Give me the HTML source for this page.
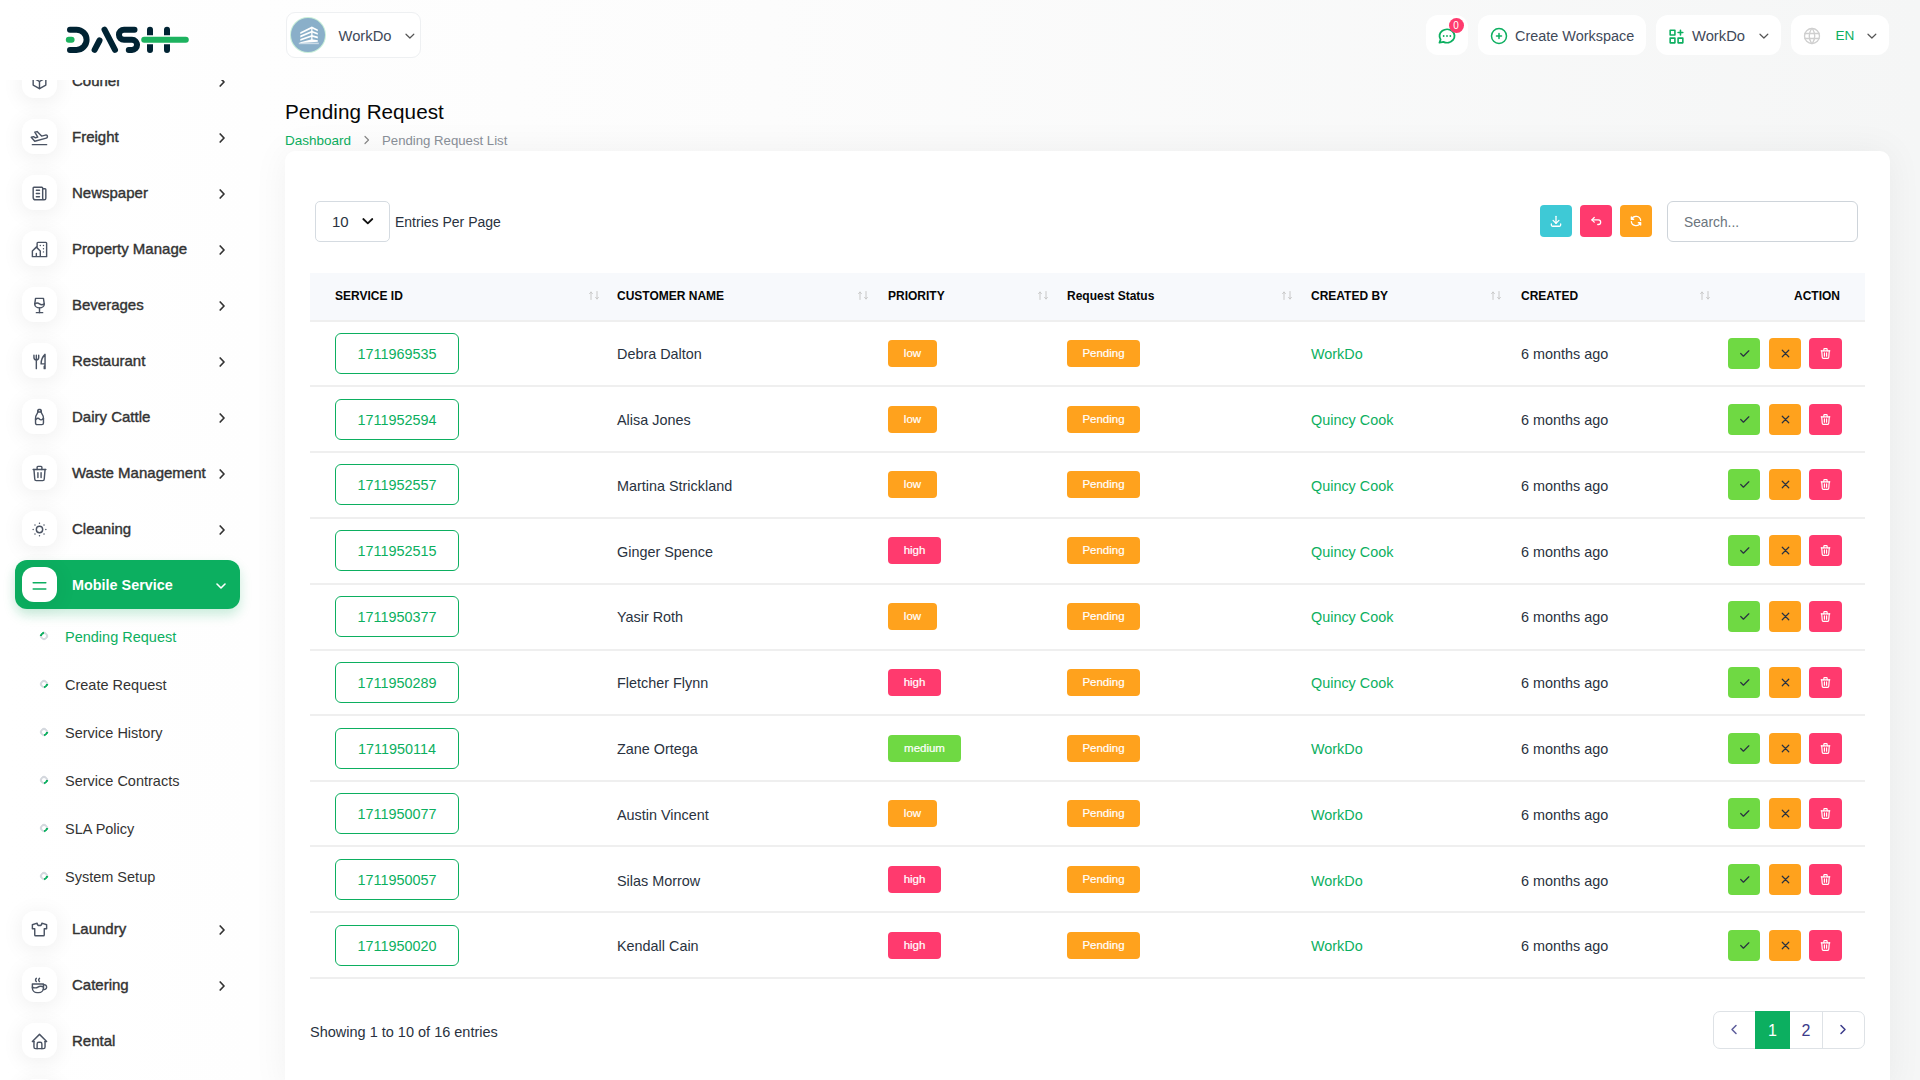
<!DOCTYPE html>
<html><head><meta charset="utf-8">
<style>
*{box-sizing:border-box;margin:0;padding:0}
html,body{width:1920px;height:1080px;overflow:hidden}
body{font-family:"Liberation Sans",sans-serif;position:relative;background:linear-gradient(90deg,#ffffff 0%,#fcfcfc 40%,#f5f6f6 100%);color:#293240}
.abs{position:absolute}
svg.ic{fill:none;stroke:currentColor;stroke-linecap:round;stroke-linejoin:round}
#sidebar{position:absolute;left:0;top:0;width:270px;height:1080px}
#menu{position:absolute;left:0;top:80px;width:270px;height:1000px;overflow:hidden}
#logohdr{position:absolute;left:0;top:0;width:270px;height:80px;z-index:5}
.mi{position:absolute;left:15px;width:225px;height:48px}
.mi .box{position:absolute;left:7px;top:6.5px;width:35px;height:35px;border-radius:12px;background:#fff;box-shadow:0 3px 22px rgba(0,0,0,0.075);color:#4a5363}
.mi .box svg{position:absolute;left:8.3px;top:8.8px;width:19px;height:19px;stroke-width:1.8}
.mi .lbl{position:absolute;left:57px;top:0;line-height:48px;font-size:15px;color:#333;-webkit-text-stroke:0.4px #333;white-space:nowrap}
.mi .chev{position:absolute;left:201.5px;top:20.5px;width:10px;height:10px;color:#333}
.mi.active{background:#0caf60;border-radius:12px;box-shadow:0 6px 12px rgba(12,175,96,0.22)}
.mi.active .lbl{color:#fff;-webkit-text-stroke:0;font-weight:bold;font-size:14.4px}
.sub{position:absolute;left:65px;font-size:14.5px;color:#333;line-height:20px;white-space:nowrap}
.sub.act{color:#0caf60}
.sub .dot{position:absolute;left:-25px;top:5px;width:8px;height:8px;border-radius:50%;border:2px solid #d4d8de;border-bottom-color:#0caf60;transform:rotate(-45deg)}
.sub.act .dot{border-bottom-color:#d4d8de;border-top-color:#0caf60}
.hbox{position:absolute;top:15px;height:40px;background:#fff;border-radius:12px}
#card{position:absolute;left:285px;top:151px;width:1605px;height:940px;background:#fff;border-radius:10px;box-shadow:0 0 36px rgba(0,20,30,0.055)}
.thead{position:absolute;left:310px;top:273px;width:1555px;height:49px;background:#f7f9fc;border-bottom:2px solid #efefef}
.th{position:absolute;top:288px;font-size:12px;font-weight:bold;color:#060606;line-height:16px;white-space:nowrap}
.srt{position:absolute;top:291px;color:#c8c8c8;stroke-width:1}
.row{position:absolute;left:310px;width:1555px;height:65.73px}
.rl{position:absolute;left:310px;width:1555px;height:2px;background:#efefef}
.cell{position:absolute;font-size:14.4px;line-height:20px;color:#293240;white-space:nowrap}
.sid{position:absolute;left:25px;top:12.5px;width:124px;height:41px;border:1px solid #0caf60;border-radius:6px;color:#0caf60;font-size:14.4px;text-align:center;line-height:40.5px}
.badge{position:absolute;top:19.5px;height:27px;border-radius:4px;color:#fff;font-size:11.5px;text-align:center;line-height:27px;-webkit-text-stroke:0.2px #fff}
.ab{position:absolute;top:17.5px;width:32px;height:31px;border-radius:4px}
.ab svg{position:absolute;left:9.5px;top:9px;width:13px;height:13px}
.tb{position:absolute;top:205px;width:32px;height:32px;border-radius:4px}
.tb svg{position:absolute;left:9px;top:9px;width:14px;height:14px;stroke:#fff;stroke-width:2.2}
</style></head>
<body>

<div id="sidebar">
<div id="logohdr">
<svg class="abs" style="left:0;top:0" width="270" height="80" viewBox="0 0 270 80">
<g fill="none" stroke-linecap="round" stroke-width="6">
<path d="M70 29.7H76.5A10.1 10.1 0 0 1 76.5 49.9H70" stroke="#002333"/>
<path d="M104.5 29.7L115 49.9M99.5 40.5L94.6 49.9" stroke="#002333"/>
<path d="M134.5 29.7H124A5.05 5.05 0 0 0 124 39.8H132A5.05 5.05 0 0 1 132 49.9H128.8" stroke="#002333"/>
<path d="M150 29.7V49.9M167 29.7V49.9" stroke="#002333"/>
<path d="M143.5 39.8H186.5" stroke="#fff" stroke-width="9"/>
<path d="M144.2 39.8H185.8M68.8 39.8H71.6" stroke="#1db25f"/>
</g></svg>
</div>

<div id="menu">
<div class="mi" style="top:-23.5px"><div class="box"><svg class="ic" viewBox="0 0 24 24" ><path d="M12 3l8 4.5v9l-8 4.5l-8-4.5v-9l8-4.5"/><path d="M12 12l8-4.5"/><path d="M12 12v9"/><path d="M12 12l-8-4.5"/></svg></div><div class="lbl">Courier</div><svg class="ic chev" viewBox="0 0 10 10" style="stroke-width:1.7"><path d="M3.2 1L7 5L3.2 9"/></svg></div>
<div class="mi" style="top:32.5px"><div class="box"><svg class="ic" viewBox="0 0 24 24" ><path d="M14.639 10.258l4.83-1.294a2 2 0 1 1 1.035 3.863l-14.489 3.883l-4.45-5.02l2.897-.776l2.45 1.414l2.897-.776l-3.743-6.244l2.898-.777l5.675 5.727z"/><path d="M3 21h18"/></svg></div><div class="lbl">Freight</div><svg class="ic chev" viewBox="0 0 10 10" style="stroke-width:1.7"><path d="M3.2 1L7 5L3.2 9"/></svg></div>
<div class="mi" style="top:88.5px"><div class="box"><svg class="ic" viewBox="0 0 24 24" ><path d="M16 6h3a1 1 0 0 1 1 1v11a2 2 0 0 1-4 0v-13a1 1 0 0 0-1-1h-10a1 1 0 0 0-1 1v12a3 3 0 0 0 3 3h11"/><path d="M8 8h4"/><path d="M8 12h4"/><path d="M8 16h4"/></svg></div><div class="lbl">Newspaper</div><svg class="ic chev" viewBox="0 0 10 10" style="stroke-width:1.7"><path d="M3.2 1L7 5L3.2 9"/></svg></div>
<div class="mi" style="top:144.5px"><div class="box"><svg class="ic" viewBox="0 0 24 24" ><path d="M8 9l5 5v7h-5v-4m0 4h-5v-7l5-5m1 1v-6a1 1 0 0 1 1-1h10a1 1 0 0 1 1 1v17h-8"/><path d="M13 7v.01"/><path d="M17 7v.01"/><path d="M17 11v.01"/><path d="M17 15v.01"/></svg></div><div class="lbl">Property Manage</div><svg class="ic chev" viewBox="0 0 10 10" style="stroke-width:1.7"><path d="M3.2 1L7 5L3.2 9"/></svg></div>
<div class="mi" style="top:200.5px"><div class="box"><svg class="ic" viewBox="0 0 24 24" ><path d="M8 21h8"/><path d="M12 15v6"/><path d="M17 3l1 7c0 3.012-2.686 5-6 5s-6-1.988-6-5l1-7h10z"/><path d="M6 10a5 5 0 0 1 6 0a5 5 0 0 0 6 0"/></svg></div><div class="lbl">Beverages</div><svg class="ic chev" viewBox="0 0 10 10" style="stroke-width:1.7"><path d="M3.2 1L7 5L3.2 9"/></svg></div>
<div class="mi" style="top:256.5px"><div class="box"><svg class="ic" viewBox="0 0 24 24" ><path d="M19 3v12h-5c-.023-3.681.184-7.406 5-12zm0 12v6h-1v-3m-10-14v17m-3-17v3a3 3 0 1 0 6 0v-3"/></svg></div><div class="lbl">Restaurant</div><svg class="ic chev" viewBox="0 0 10 10" style="stroke-width:1.7"><path d="M3.2 1L7 5L3.2 9"/></svg></div>
<div class="mi" style="top:312.5px"><div class="box"><svg class="ic" viewBox="0 0 24 24" ><path d="M10 5h4v-2a1 1 0 0 0-1-1h-2a1 1 0 0 0-1 1v2z"/><path d="M14 3.5c0 1.626.507 3.212 1.45 4.537l.05.07a8.093 8.093 0 0 1 1.5 4.694v6.199a2 2 0 0 1-2 2h-6a2 2 0 0 1-2-2v-6.2c0-1.682.524-3.322 1.5-4.693l.05-.07a7.823 7.823 0 0 0 1.45-4.537"/><path d="M7 14.803a2.4 2.4 0 0 0 1-.803a2.4 2.4 0 0 1 2-1a2.4 2.4 0 0 1 2 1a2.4 2.4 0 0 0 2 1a2.4 2.4 0 0 0 2-1a2.4 2.4 0 0 1 1-.805"/></svg></div><div class="lbl">Dairy Cattle</div><svg class="ic chev" viewBox="0 0 10 10" style="stroke-width:1.7"><path d="M3.2 1L7 5L3.2 9"/></svg></div>
<div class="mi" style="top:368.5px"><div class="box"><svg class="ic" viewBox="0 0 24 24" ><path d="M4 7h16"/><path d="M10 11v6"/><path d="M14 11v6"/><path d="M5 7l1 12a2 2 0 0 0 2 2h8a2 2 0 0 0 2-2l1-12"/><path d="M9 7v-3a1 1 0 0 1 1-1h4a1 1 0 0 1 1 1v3"/></svg></div><div class="lbl">Waste Management</div><svg class="ic chev" viewBox="0 0 10 10" style="stroke-width:1.7"><path d="M3.2 1L7 5L3.2 9"/></svg></div>
<div class="mi" style="top:424.5px"><div class="box"><svg class="ic" viewBox="0 0 24 24" ><path d="M12 12m-4 0a4 4 0 1 0 8 0a4 4 0 1 0-8 0"/><path d="M4 12h.01"/><path d="M12 4v.01"/><path d="M20 12h.01"/><path d="M12 20v.01"/><path d="M6.31 6.31l-.01-.01"/><path d="M17.71 6.31l-.01-.01"/><path d="M17.7 17.7l.01.01"/><path d="M6.3 17.7l.01.01"/></svg></div><div class="lbl">Cleaning</div><svg class="ic chev" viewBox="0 0 10 10" style="stroke-width:1.7"><path d="M3.2 1L7 5L3.2 9"/></svg></div>
<div class="mi" style="top:824.5px"><div class="box"><svg class="ic" viewBox="0 0 24 24" ><path d="M15 4l6 2v5h-3v8a1 1 0 0 1-1 1h-10a1 1 0 0 1-1-1v-8h-3v-5l6-2a3 3 0 0 0 6 0"/></svg></div><div class="lbl">Laundry</div><svg class="ic chev" viewBox="0 0 10 10" style="stroke-width:1.7"><path d="M3.2 1L7 5L3.2 9"/></svg></div>
<div class="mi" style="top:880.5px"><div class="box"><svg class="ic" viewBox="0 0 24 24" ><path d="M3 14c.83.642 2.077 1.017 3.5 1c1.423.017 2.67-.358 3.5-1c.83-.642 2.077-1.017 3.5-1c1.423-.017 2.67.358 3.5 1"/><path d="M8 3a2.4 2.4 0 0 0-1 2a2.4 2.4 0 0 0 1 2"/><path d="M12 3a2.4 2.4 0 0 0-1 2a2.4 2.4 0 0 0 1 2"/><path d="M3 10h14v5a6 6 0 0 1-6 6h-2a6 6 0 0 1-6-6v-5z"/><path d="M16.746 16.726a3 3 0 1 0 .252-5.555"/></svg></div><div class="lbl">Catering</div><svg class="ic chev" viewBox="0 0 10 10" style="stroke-width:1.7"><path d="M3.2 1L7 5L3.2 9"/></svg></div>
<div class="mi" style="top:936.5px"><div class="box"><svg class="ic" viewBox="0 0 24 24" ><path d="M5 12h-2l9-9l9 9h-2"/><path d="M5 12v7a2 2 0 0 0 2 2h10a2 2 0 0 0 2-2v-7"/><path d="M9 21v-6a2 2 0 0 1 2-2h2a2 2 0 0 1 2 2v6"/></svg></div><div class="lbl">Rental</div></div>
<div class="mi" style="top:992.5px"><div class="box"><svg class="ic" viewBox="0 0 24 24" ><path d="M12 3l8 4.5v9l-8 4.5l-8-4.5v-9l8-4.5"/><path d="M12 12l8-4.5"/><path d="M12 12v9"/><path d="M12 12l-8-4.5"/></svg></div><div class="lbl"></div></div>
<div class="mi active" style="top:480px;height:48.6px"><div class="box" style="color:#0caf60;top:7px"><svg class="ic" viewBox="0 0 24 24" ><path d="M4 8.5h16"/><path d="M4 16.5h16"/></svg></div><div class="lbl" style="line-height:48.6px;top:1px">Mobile Service</div><svg class="ic chev" viewBox="0 0 10 10" style="stroke-width:1.6;color:#fff;left:201px"><path d="M1 3L5 7L9 3"/></svg></div>
<div class="sub act" style="top:547px"><span class="dot"></span>Pending Request</div>
<div class="sub" style="top:595px"><span class="dot"></span>Create Request</div>
<div class="sub" style="top:643px"><span class="dot"></span>Service History</div>
<div class="sub" style="top:691px"><span class="dot"></span>Service Contracts</div>
<div class="sub" style="top:739px"><span class="dot"></span>SLA Policy</div>
<div class="sub" style="top:787px"><span class="dot"></span>System Setup</div>
</div></div>
<div class="hbox" style="left:285.5px;top:12px;width:135.5px;height:45.5px;border:1px solid #eef0f2;border-radius:9px">
 <div class="abs" style="left:4.5px;top:5px;width:34px;height:34px;border-radius:50%;background:#8aafc9;box-shadow:0 0 0 1px #c9efd9"></div>
 <svg class="abs" style="left:11px;top:12px" width="22" height="20" viewBox="0 0 22 20"><g fill="#fff">
 <path d="M2.3 7.2L13.9 1.6L19.8 4.4V6.2L13.9 3.4L2.3 9Z"/>
 <path d="M2.3 10.6L13.9 5.8L19.8 8V9.8L13.9 7.6L2.3 12.4Z"/>
 <path d="M2.3 14L13.9 10L19.8 11.6V13.4L13.9 11.8L2.3 15.8Z"/>
 <path d="M2.3 17.2L13.9 14.2L19.8 15.2V16.8L2.3 17.9Z"/>
 <rect x="13.2" y="2" width="1.3" height="15"/>
 <rect x="0.8" y="17.6" width="20" height="1.6" opacity="0.55"/></g></svg>
 <div class="abs" style="left:52px;top:13.5px;font-size:14.75px;line-height:18px;color:#3f4a5a">WorkDo</div>
 <svg class="ic abs" style="left:118.5px;top:20px;color:#555" width="10" height="7" viewBox="0 0 10 7"><path d="M1 1.2L4.9 5L8.8 1.2" style="stroke-width:1.2"/></svg>
</div>
<div class="hbox" style="left:1426px;width:42px">
 <svg class="ic abs" style="left:11px;top:11px;color:#0caf60;stroke-width:2.2" width="20" height="20" viewBox="0 0 24 24"><path d="M3 20l1.3-3.9c-2.324-3.437-1.426-7.872 2.1-10.374c3.526-2.501 8.59-2.296 11.845.48c3.255 2.777 3.695 7.266 1.029 10.501c-2.666 3.235-7.615 4.215-11.574 2.293l-4.7 1"/><path d="M12 12v.01M8 12v.01M16 12v.01"/></svg>
 <div class="abs" style="left:22.5px;top:2.5px;width:15px;height:15px;border-radius:50%;background:#ff3a6e;color:#fff;font-size:10px;line-height:15px;text-align:center">0</div>
</div>
<div class="hbox" style="left:1478px;width:168px">
 <svg class="ic abs" style="left:11px;top:10.5px;color:#0caf60;stroke-width:1.8" width="20" height="20" viewBox="0 0 24 24"><path d="M3 12a9 9 0 1 0 18 0a9 9 0 1 0-18 0"/><path d="M9 12h6M12 9v6"/></svg>
 <div class="abs" style="left:37px;top:11.6px;font-size:14.45px;line-height:18px;color:#3f4a5a;white-space:nowrap">Create Workspace</div>
</div>
<div class="hbox" style="left:1656px;width:125px">
 <svg class="ic abs" style="left:11px;top:11.5px;color:#0caf60;stroke-width:2" width="19" height="19" viewBox="0 0 24 24"><path d="M4 4h6v6h-6zM4 14h6v6h-6zM14 14h6v6h-6zM14 7h6M17 4v6"/></svg>
 <div class="abs" style="left:36px;top:11.5px;font-size:14.75px;line-height:18px;color:#3f4a5a">WorkDo</div>
 <svg class="ic abs" style="left:102.5px;top:18px;color:#555" width="10" height="7" viewBox="0 0 10 7"><path d="M1 1.2L4.9 5L8.8 1.2" style="stroke-width:1.2"/></svg>
</div>
<div class="hbox" style="left:1791px;width:98px">
 <svg class="ic abs" style="left:11px;top:10.5px;color:#cfcfcf;stroke-width:1.6" width="20" height="20" viewBox="0 0 24 24"><path d="M3 12a9 9 0 1 0 18 0a9 9 0 1 0-18 0"/><path d="M3.6 9h16.8M3.6 15h16.8"/><path d="M11.5 3a17 17 0 0 0 0 18M12.5 3a17 17 0 0 1 0 18"/></svg>
 <div class="abs" style="left:44.5px;top:11.5px;font-size:13.6px;line-height:18px;color:#0caf60">EN</div>
 <svg class="ic abs" style="left:75.5px;top:18px;color:#555" width="10" height="7" viewBox="0 0 10 7"><path d="M1 1.2L4.9 5L8.8 1.2" style="stroke-width:1.2"/></svg>
</div>
<div class="abs" style="left:285px;top:100px;font-size:20.7px;line-height:24px;color:#060606;white-space:nowrap">Pending Request</div>
<div class="abs" style="left:285px;top:133px;font-size:13.5px;line-height:16px;color:#0caf60;white-space:nowrap">Dashboard</div>
<svg class="ic abs" style="left:363px;top:135px;color:#888" width="8" height="10" viewBox="0 0 8 10"><path d="M2 1.5L5.5 5L2 8.5" style="stroke-width:1.2"/></svg>
<div class="abs" style="left:382px;top:133px;font-size:13.2px;line-height:16px;color:#8a9099;white-space:nowrap">Pending Request List</div>

<div id="card"></div>
<div class="abs" style="left:315px;top:201px;width:75px;height:40.5px;border:1px solid #d5dbe1;border-radius:5px"></div>
<div class="abs" style="left:332px;top:213px;font-size:15px;line-height:18px;color:#293240">10</div>
<svg class="ic abs" style="left:361px;top:217px;color:#111;stroke-width:1.8" width="13" height="9" viewBox="0 0 13 9"><path d="M2.3 2L6.8 6.3L11.3 2"/></svg>
<div class="abs" style="left:395px;top:213px;font-size:14px;line-height:18px;color:#293240;white-space:nowrap">Entries Per Page</div>
<div class="tb" style="left:1540px;background:#3ec9d6"><svg class="ic" viewBox="0 0 24 24"><path d="M4 17v2a2 2 0 0 0 2 2h12a2 2 0 0 0 2-2v-2"/><path d="M7 11l5 5l5-5"/><path d="M12 4v12"/></svg></div>
<div class="tb" style="left:1580px;background:#ff3a6e"><svg class="ic" viewBox="0 0 24 24"><path d="M9 14l-4-4l4-4"/><path d="M5 10h11a4 4 0 1 1 0 8h-1"/></svg></div>
<div class="tb" style="left:1620px;background:#ffa21d"><svg class="ic" viewBox="0 0 24 24"><path d="M20 11a8.1 8.1 0 0 0-15.5-2m-.5-4v4h4"/><path d="M4 13a8.1 8.1 0 0 0 15.5 2m.5 4v-4h-4"/></svg></div>
<div class="abs" style="left:1667px;top:201px;width:191px;height:40.5px;border:1px solid #ced4da;border-radius:6px"></div>
<div class="abs" style="left:1684px;top:214px;font-size:13.75px;line-height:18px;color:#6c757d">Search...</div>

<div class="thead"></div>
<div class="th" style="left:335px">SERVICE ID</div><svg class="ic srt" style="left:589px" width="10" height="9" viewBox="0 0 10 9"><path d="M2 8.5V1M0.6 2.6L2 1L3.4 2.6M8 0.5V8M6.6 6.4L8 8L9.4 6.4"/></svg>
<div class="th" style="left:617px">CUSTOMER NAME</div><svg class="ic srt" style="left:858px" width="10" height="9" viewBox="0 0 10 9"><path d="M2 8.5V1M0.6 2.6L2 1L3.4 2.6M8 0.5V8M6.6 6.4L8 8L9.4 6.4"/></svg>
<div class="th" style="left:888px">PRIORITY</div><svg class="ic srt" style="left:1038px" width="10" height="9" viewBox="0 0 10 9"><path d="M2 8.5V1M0.6 2.6L2 1L3.4 2.6M8 0.5V8M6.6 6.4L8 8L9.4 6.4"/></svg>
<div class="th" style="left:1067px">Request Status</div><svg class="ic srt" style="left:1282px" width="10" height="9" viewBox="0 0 10 9"><path d="M2 8.5V1M0.6 2.6L2 1L3.4 2.6M8 0.5V8M6.6 6.4L8 8L9.4 6.4"/></svg>
<div class="th" style="left:1311px">CREATED BY</div><svg class="ic srt" style="left:1491px" width="10" height="9" viewBox="0 0 10 9"><path d="M2 8.5V1M0.6 2.6L2 1L3.4 2.6M8 0.5V8M6.6 6.4L8 8L9.4 6.4"/></svg>
<div class="th" style="left:1521px">CREATED</div><svg class="ic srt" style="left:1700px" width="10" height="9" viewBox="0 0 10 9"><path d="M2 8.5V1M0.6 2.6L2 1L3.4 2.6M8 0.5V8M6.6 6.4L8 8L9.4 6.4"/></svg>
<div class="th" style="left:auto;right:80px">ACTION</div>
<div class="rl" style="top:385px"></div>
<div class="row" style="top:320.40px"><div class="sid">1711969535</div><div class="cell nm" style="left:307px;top:23.8px">Debra Dalton</div><div class="badge" style="left:578px;width:49px;background:#ffa21d">low</div><div class="badge" style="left:757px;width:73px;background:#ffa21d">Pending</div><div class="cell" style="left:1001px;top:23.8px;color:#0caf60">WorkDo</div><div class="cell" style="left:1211px;top:23.8px">6 months ago</div><div class="ab" style="left:1418px;background:#6fd943"><svg class="ic" viewBox="0 0 24 24" style="stroke:#293240;stroke-width:2.2"><path d="M5 12l5 5l10-10"/></svg></div><div class="ab" style="left:1459px;background:#ffa21d"><svg class="ic" viewBox="0 0 24 24" style="stroke:#293240;stroke-width:2.2"><path d="M18 6L6 18M6 6l12 12"/></svg></div><div class="ab" style="left:1499px;width:33px;background:#ff3a6e"><svg class="ic" viewBox="0 0 24 24" style="stroke:#fff;stroke-width:2.2"><path d="M4 7h16"/><path d="M10 11v6"/><path d="M14 11v6"/><path d="M5 7l1 12a2 2 0 0 0 2 2h8a2 2 0 0 0 2-2l1-12"/><path d="M9 7v-3a1 1 0 0 1 1-1h4a1 1 0 0 1 1 1v3"/></svg></div></div>
<div class="rl" style="top:451px"></div>
<div class="row" style="top:386.19px"><div class="sid">1711952594</div><div class="cell nm" style="left:307px;top:23.8px">Alisa Jones</div><div class="badge" style="left:578px;width:49px;background:#ffa21d">low</div><div class="badge" style="left:757px;width:73px;background:#ffa21d">Pending</div><div class="cell" style="left:1001px;top:23.8px;color:#0caf60">Quincy Cook</div><div class="cell" style="left:1211px;top:23.8px">6 months ago</div><div class="ab" style="left:1418px;background:#6fd943"><svg class="ic" viewBox="0 0 24 24" style="stroke:#293240;stroke-width:2.2"><path d="M5 12l5 5l10-10"/></svg></div><div class="ab" style="left:1459px;background:#ffa21d"><svg class="ic" viewBox="0 0 24 24" style="stroke:#293240;stroke-width:2.2"><path d="M18 6L6 18M6 6l12 12"/></svg></div><div class="ab" style="left:1499px;width:33px;background:#ff3a6e"><svg class="ic" viewBox="0 0 24 24" style="stroke:#fff;stroke-width:2.2"><path d="M4 7h16"/><path d="M10 11v6"/><path d="M14 11v6"/><path d="M5 7l1 12a2 2 0 0 0 2 2h8a2 2 0 0 0 2-2l1-12"/><path d="M9 7v-3a1 1 0 0 1 1-1h4a1 1 0 0 1 1 1v3"/></svg></div></div>
<div class="rl" style="top:517px"></div>
<div class="row" style="top:451.98px"><div class="sid">1711952557</div><div class="cell nm" style="left:307px;top:23.8px">Martina Strickland</div><div class="badge" style="left:578px;width:49px;background:#ffa21d">low</div><div class="badge" style="left:757px;width:73px;background:#ffa21d">Pending</div><div class="cell" style="left:1001px;top:23.8px;color:#0caf60">Quincy Cook</div><div class="cell" style="left:1211px;top:23.8px">6 months ago</div><div class="ab" style="left:1418px;background:#6fd943"><svg class="ic" viewBox="0 0 24 24" style="stroke:#293240;stroke-width:2.2"><path d="M5 12l5 5l10-10"/></svg></div><div class="ab" style="left:1459px;background:#ffa21d"><svg class="ic" viewBox="0 0 24 24" style="stroke:#293240;stroke-width:2.2"><path d="M18 6L6 18M6 6l12 12"/></svg></div><div class="ab" style="left:1499px;width:33px;background:#ff3a6e"><svg class="ic" viewBox="0 0 24 24" style="stroke:#fff;stroke-width:2.2"><path d="M4 7h16"/><path d="M10 11v6"/><path d="M14 11v6"/><path d="M5 7l1 12a2 2 0 0 0 2 2h8a2 2 0 0 0 2-2l1-12"/><path d="M9 7v-3a1 1 0 0 1 1-1h4a1 1 0 0 1 1 1v3"/></svg></div></div>
<div class="rl" style="top:583px"></div>
<div class="row" style="top:517.77px"><div class="sid">1711952515</div><div class="cell nm" style="left:307px;top:23.8px">Ginger Spence</div><div class="badge" style="left:578px;width:53px;background:#ff3a6e">high</div><div class="badge" style="left:757px;width:73px;background:#ffa21d">Pending</div><div class="cell" style="left:1001px;top:23.8px;color:#0caf60">Quincy Cook</div><div class="cell" style="left:1211px;top:23.8px">6 months ago</div><div class="ab" style="left:1418px;background:#6fd943"><svg class="ic" viewBox="0 0 24 24" style="stroke:#293240;stroke-width:2.2"><path d="M5 12l5 5l10-10"/></svg></div><div class="ab" style="left:1459px;background:#ffa21d"><svg class="ic" viewBox="0 0 24 24" style="stroke:#293240;stroke-width:2.2"><path d="M18 6L6 18M6 6l12 12"/></svg></div><div class="ab" style="left:1499px;width:33px;background:#ff3a6e"><svg class="ic" viewBox="0 0 24 24" style="stroke:#fff;stroke-width:2.2"><path d="M4 7h16"/><path d="M10 11v6"/><path d="M14 11v6"/><path d="M5 7l1 12a2 2 0 0 0 2 2h8a2 2 0 0 0 2-2l1-12"/><path d="M9 7v-3a1 1 0 0 1 1-1h4a1 1 0 0 1 1 1v3"/></svg></div></div>
<div class="rl" style="top:649px"></div>
<div class="row" style="top:583.56px"><div class="sid">1711950377</div><div class="cell nm" style="left:307px;top:23.8px">Yasir Roth</div><div class="badge" style="left:578px;width:49px;background:#ffa21d">low</div><div class="badge" style="left:757px;width:73px;background:#ffa21d">Pending</div><div class="cell" style="left:1001px;top:23.8px;color:#0caf60">Quincy Cook</div><div class="cell" style="left:1211px;top:23.8px">6 months ago</div><div class="ab" style="left:1418px;background:#6fd943"><svg class="ic" viewBox="0 0 24 24" style="stroke:#293240;stroke-width:2.2"><path d="M5 12l5 5l10-10"/></svg></div><div class="ab" style="left:1459px;background:#ffa21d"><svg class="ic" viewBox="0 0 24 24" style="stroke:#293240;stroke-width:2.2"><path d="M18 6L6 18M6 6l12 12"/></svg></div><div class="ab" style="left:1499px;width:33px;background:#ff3a6e"><svg class="ic" viewBox="0 0 24 24" style="stroke:#fff;stroke-width:2.2"><path d="M4 7h16"/><path d="M10 11v6"/><path d="M14 11v6"/><path d="M5 7l1 12a2 2 0 0 0 2 2h8a2 2 0 0 0 2-2l1-12"/><path d="M9 7v-3a1 1 0 0 1 1-1h4a1 1 0 0 1 1 1v3"/></svg></div></div>
<div class="rl" style="top:714px"></div>
<div class="row" style="top:649.35px"><div class="sid">1711950289</div><div class="cell nm" style="left:307px;top:23.8px">Fletcher Flynn</div><div class="badge" style="left:578px;width:53px;background:#ff3a6e">high</div><div class="badge" style="left:757px;width:73px;background:#ffa21d">Pending</div><div class="cell" style="left:1001px;top:23.8px;color:#0caf60">Quincy Cook</div><div class="cell" style="left:1211px;top:23.8px">6 months ago</div><div class="ab" style="left:1418px;background:#6fd943"><svg class="ic" viewBox="0 0 24 24" style="stroke:#293240;stroke-width:2.2"><path d="M5 12l5 5l10-10"/></svg></div><div class="ab" style="left:1459px;background:#ffa21d"><svg class="ic" viewBox="0 0 24 24" style="stroke:#293240;stroke-width:2.2"><path d="M18 6L6 18M6 6l12 12"/></svg></div><div class="ab" style="left:1499px;width:33px;background:#ff3a6e"><svg class="ic" viewBox="0 0 24 24" style="stroke:#fff;stroke-width:2.2"><path d="M4 7h16"/><path d="M10 11v6"/><path d="M14 11v6"/><path d="M5 7l1 12a2 2 0 0 0 2 2h8a2 2 0 0 0 2-2l1-12"/><path d="M9 7v-3a1 1 0 0 1 1-1h4a1 1 0 0 1 1 1v3"/></svg></div></div>
<div class="rl" style="top:780px"></div>
<div class="row" style="top:715.14px"><div class="sid">1711950114</div><div class="cell nm" style="left:307px;top:23.8px">Zane Ortega</div><div class="badge" style="left:578px;width:73px;background:#6fd943">medium</div><div class="badge" style="left:757px;width:73px;background:#ffa21d">Pending</div><div class="cell" style="left:1001px;top:23.8px;color:#0caf60">WorkDo</div><div class="cell" style="left:1211px;top:23.8px">6 months ago</div><div class="ab" style="left:1418px;background:#6fd943"><svg class="ic" viewBox="0 0 24 24" style="stroke:#293240;stroke-width:2.2"><path d="M5 12l5 5l10-10"/></svg></div><div class="ab" style="left:1459px;background:#ffa21d"><svg class="ic" viewBox="0 0 24 24" style="stroke:#293240;stroke-width:2.2"><path d="M18 6L6 18M6 6l12 12"/></svg></div><div class="ab" style="left:1499px;width:33px;background:#ff3a6e"><svg class="ic" viewBox="0 0 24 24" style="stroke:#fff;stroke-width:2.2"><path d="M4 7h16"/><path d="M10 11v6"/><path d="M14 11v6"/><path d="M5 7l1 12a2 2 0 0 0 2 2h8a2 2 0 0 0 2-2l1-12"/><path d="M9 7v-3a1 1 0 0 1 1-1h4a1 1 0 0 1 1 1v3"/></svg></div></div>
<div class="rl" style="top:845px"></div>
<div class="row" style="top:780.93px"><div class="sid">1711950077</div><div class="cell nm" style="left:307px;top:23.8px">Austin Vincent</div><div class="badge" style="left:578px;width:49px;background:#ffa21d">low</div><div class="badge" style="left:757px;width:73px;background:#ffa21d">Pending</div><div class="cell" style="left:1001px;top:23.8px;color:#0caf60">WorkDo</div><div class="cell" style="left:1211px;top:23.8px">6 months ago</div><div class="ab" style="left:1418px;background:#6fd943"><svg class="ic" viewBox="0 0 24 24" style="stroke:#293240;stroke-width:2.2"><path d="M5 12l5 5l10-10"/></svg></div><div class="ab" style="left:1459px;background:#ffa21d"><svg class="ic" viewBox="0 0 24 24" style="stroke:#293240;stroke-width:2.2"><path d="M18 6L6 18M6 6l12 12"/></svg></div><div class="ab" style="left:1499px;width:33px;background:#ff3a6e"><svg class="ic" viewBox="0 0 24 24" style="stroke:#fff;stroke-width:2.2"><path d="M4 7h16"/><path d="M10 11v6"/><path d="M14 11v6"/><path d="M5 7l1 12a2 2 0 0 0 2 2h8a2 2 0 0 0 2-2l1-12"/><path d="M9 7v-3a1 1 0 0 1 1-1h4a1 1 0 0 1 1 1v3"/></svg></div></div>
<div class="rl" style="top:911px"></div>
<div class="row" style="top:846.72px"><div class="sid">1711950057</div><div class="cell nm" style="left:307px;top:23.8px">Silas Morrow</div><div class="badge" style="left:578px;width:53px;background:#ff3a6e">high</div><div class="badge" style="left:757px;width:73px;background:#ffa21d">Pending</div><div class="cell" style="left:1001px;top:23.8px;color:#0caf60">WorkDo</div><div class="cell" style="left:1211px;top:23.8px">6 months ago</div><div class="ab" style="left:1418px;background:#6fd943"><svg class="ic" viewBox="0 0 24 24" style="stroke:#293240;stroke-width:2.2"><path d="M5 12l5 5l10-10"/></svg></div><div class="ab" style="left:1459px;background:#ffa21d"><svg class="ic" viewBox="0 0 24 24" style="stroke:#293240;stroke-width:2.2"><path d="M18 6L6 18M6 6l12 12"/></svg></div><div class="ab" style="left:1499px;width:33px;background:#ff3a6e"><svg class="ic" viewBox="0 0 24 24" style="stroke:#fff;stroke-width:2.2"><path d="M4 7h16"/><path d="M10 11v6"/><path d="M14 11v6"/><path d="M5 7l1 12a2 2 0 0 0 2 2h8a2 2 0 0 0 2-2l1-12"/><path d="M9 7v-3a1 1 0 0 1 1-1h4a1 1 0 0 1 1 1v3"/></svg></div></div>
<div class="rl" style="top:977px"></div>
<div class="row" style="top:912.51px"><div class="sid">1711950020</div><div class="cell nm" style="left:307px;top:23.8px">Kendall Cain</div><div class="badge" style="left:578px;width:53px;background:#ff3a6e">high</div><div class="badge" style="left:757px;width:73px;background:#ffa21d">Pending</div><div class="cell" style="left:1001px;top:23.8px;color:#0caf60">WorkDo</div><div class="cell" style="left:1211px;top:23.8px">6 months ago</div><div class="ab" style="left:1418px;background:#6fd943"><svg class="ic" viewBox="0 0 24 24" style="stroke:#293240;stroke-width:2.2"><path d="M5 12l5 5l10-10"/></svg></div><div class="ab" style="left:1459px;background:#ffa21d"><svg class="ic" viewBox="0 0 24 24" style="stroke:#293240;stroke-width:2.2"><path d="M18 6L6 18M6 6l12 12"/></svg></div><div class="ab" style="left:1499px;width:33px;background:#ff3a6e"><svg class="ic" viewBox="0 0 24 24" style="stroke:#fff;stroke-width:2.2"><path d="M4 7h16"/><path d="M10 11v6"/><path d="M14 11v6"/><path d="M5 7l1 12a2 2 0 0 0 2 2h8a2 2 0 0 0 2-2l1-12"/><path d="M9 7v-3a1 1 0 0 1 1-1h4a1 1 0 0 1 1 1v3"/></svg></div></div>
<div class="abs" style="left:310px;top:1023px;font-size:14.5px;line-height:18px;color:#293240;white-space:nowrap">Showing 1 to 10 of 16 entries</div>
<div class="abs" style="left:1713px;top:1011px;width:152px;height:38px;border:1px solid #dee2e6;border-radius:7px"></div>
<div class="abs" style="left:1755px;top:1011px;width:35px;height:38px;background:#0caf60;color:#fff;font-size:16px;line-height:39px;text-align:center">1</div>
<div class="abs" style="left:1790px;top:1012px;width:33px;height:36px;color:#3a3a8a;font-size:16px;line-height:37px;text-align:center;border-right:1px solid #dee2e6">2</div>
<svg class="ic abs" style="left:1730px;top:1024px;color:#5b5b9a;stroke-width:1.5" width="8" height="11" viewBox="0 0 8 11"><path d="M6 1.5L2 5.5L6 9.5"/></svg>
<svg class="ic abs" style="left:1839px;top:1024px;color:#3a3a8a;stroke-width:1.5" width="8" height="11" viewBox="0 0 8 11"><path d="M2 1.5L6 5.5L2 9.5"/></svg>

</body></html>
